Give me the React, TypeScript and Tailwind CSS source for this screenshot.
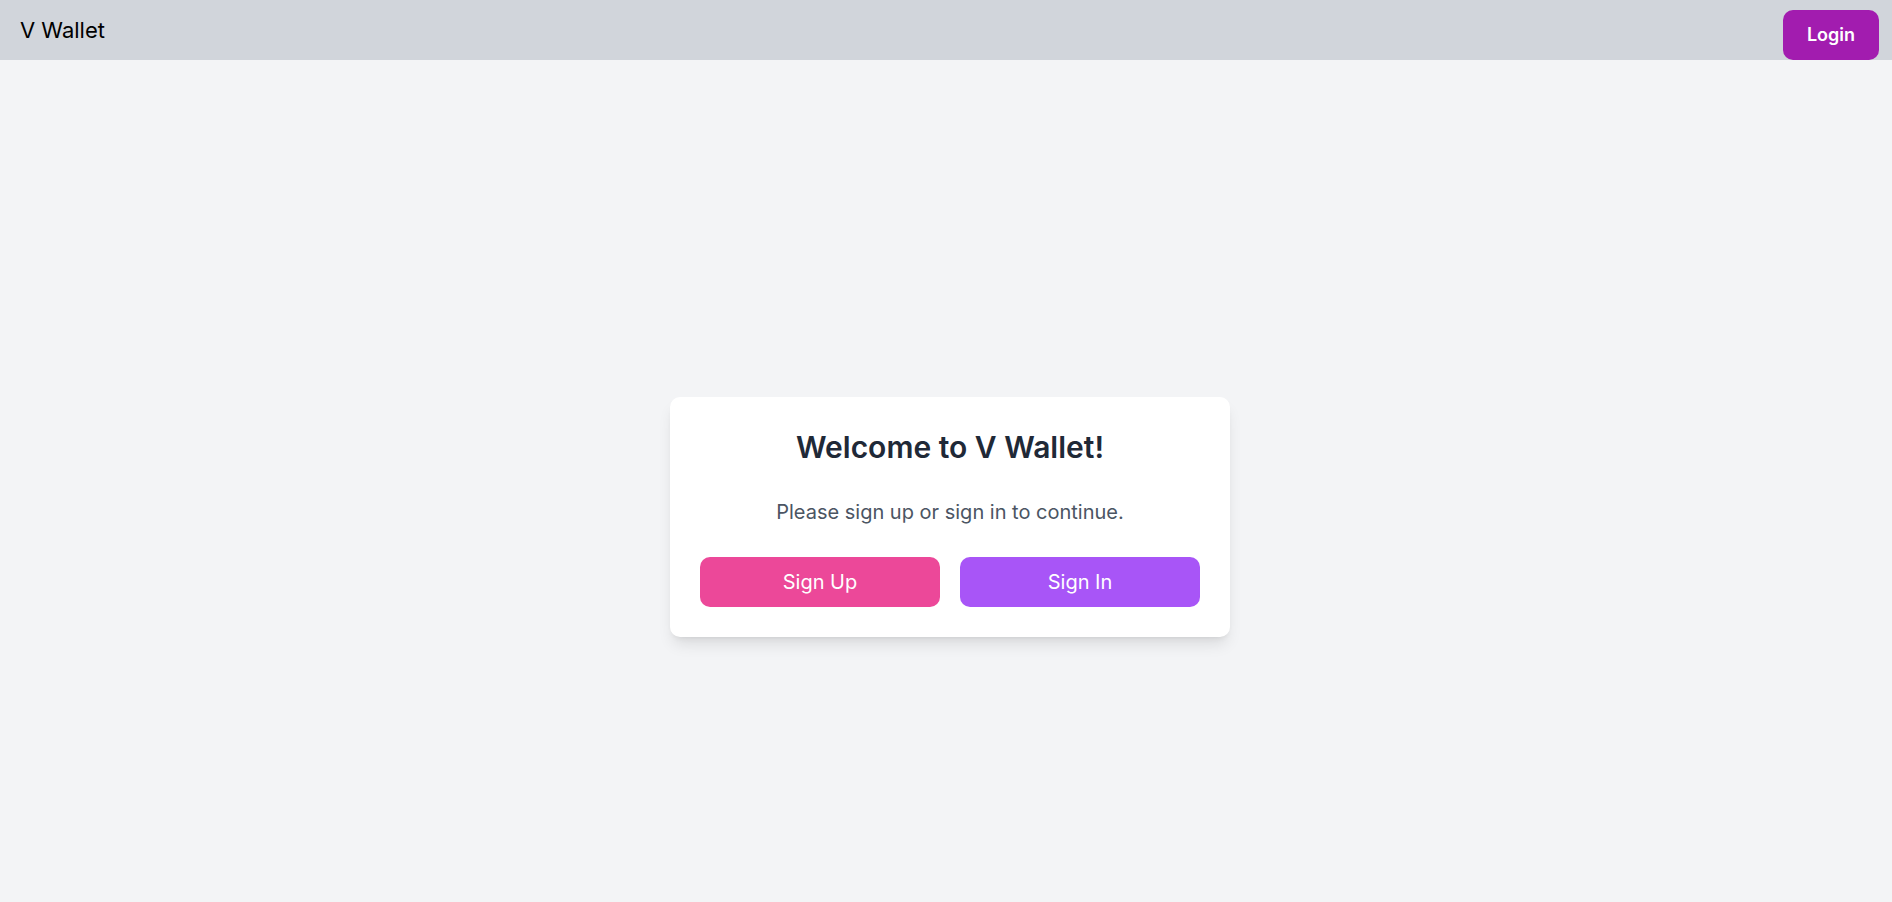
export default function App() {
  return (
    <div className="min-h-screen bg-[#f3f4f6] font-['Inter',sans-serif]">
      <header className="flex h-[60px] items-start justify-between bg-[#d1d5db]">
        <div className="flex h-[60px] items-center pl-5 text-[22px] text-black">V Wallet</div>
        <button className="mr-[13px] mt-[10px] h-[50px] w-[96px] rounded-[10px] bg-[#a21caf] text-lg font-semibold text-white">
          Login
        </button>
      </header>

      <main className="flex h-[842px] items-center justify-center pl-[8px] pt-[72px]">
        <div className="w-[560px] rounded-[10px] bg-white p-[30px] text-center shadow-lg">
          <h1 className="text-[30px] font-semibold leading-[40px] text-[#1f2937]">Welcome to V Wallet!</h1>
          <p className="mt-[30px] text-[20px] leading-[30px] text-[#4b5563]">Please sign up or sign in to continue.</p>
          <div className="mt-[30px] grid grid-cols-2 gap-[20px]">
            <button className="h-[50px] rounded-[10px] bg-[#ec4899] text-[20px] text-white">Sign Up</button>
            <button className="h-[50px] rounded-[10px] bg-[#a855f7] text-[20px] text-white">Sign In</button>
          </div>
        </div>
      </main>
    </div>
  );
}
